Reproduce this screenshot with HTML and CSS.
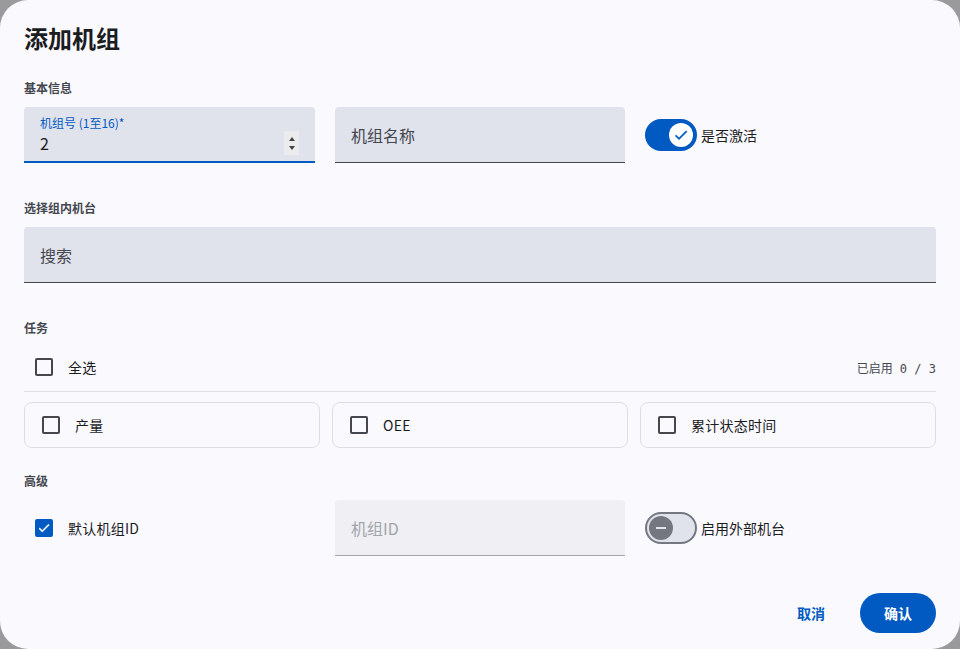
FILE: index.html
```html
<!DOCTYPE html>
<html lang="zh-CN">
<head>
    <meta charset="UTF-8">
    <meta name="viewport" content="width=device-width, initial-scale=1.0">
    <title>添加机组</title>
    <link rel="stylesheet" href="styles.css">
</head>
<body>
    <div class="dialog">
        <h1 class="title">添加机组</h1>

        <div class="section-label first">基本信息</div>
        <div class="row">
            <div class="field focused">
                <span class="field-label">机组号 (1至16)*</span>
                <span class="field-value">2</span>
                <span class="spin"><i class="up"></i><i class="down"></i></span>
            </div>
            <div class="field">
                <span class="placeholder">机组名称</span>
            </div>
            <div class="switch-wrap">
                <span class="switch on">
                    <span class="thumb">
                        <svg width="16" height="16" viewBox="0 0 24 24"><path d="M9 16.2 4.8 12l-1.4 1.4L9 19 21 7l-1.4-1.4z" fill="#005ac1" stroke="#005ac1" stroke-width="0.8"/></svg>
                    </span>
                </span>
                <span class="switch-text">是否激活</span>
            </div>
        </div>

        <div class="section-label">选择组内机台</div>
        <div class="field wide">
            <span class="placeholder">搜索</span>
        </div>

        <div class="section-label">任务</div>
        <div class="select-all">
            <span class="box"></span>
            <span class="check-text">全选</span>
            <span class="count">已启用 0 / 3</span>
        </div>
        <div class="divider"></div>
        <div class="cards">
            <div class="card"><span class="box"></span><span class="check-text">产量</span></div>
            <div class="card"><span class="box"></span><span class="check-text">OEE</span></div>
            <div class="card"><span class="box"></span><span class="check-text">累计状态时间</span></div>
        </div>

        <div class="section-label after-cards">高级</div>
        <div class="row">
            <div class="check-cell">
                <span class="box checked">
                    <svg width="14" height="14" viewBox="0 0 24 24"><path d="M9 16.2 4.8 12l-1.4 1.4L9 19 21 7l-1.4-1.4z" fill="#fff" stroke="#fff" stroke-width="1"/></svg>
                </span>
                <span class="check-text">默认机组ID</span>
            </div>
            <div class="field disabled">
                <span class="placeholder">机组ID</span>
            </div>
            <div class="switch-wrap">
                <span class="switch off">
                    <span class="thumb"><span class="minus"></span></span>
                </span>
                <span class="switch-text">启用外部机台</span>
            </div>
        </div>

        <div class="actions">
            <button class="btn-text">取消</button>
            <button class="btn-filled">确认</button>
        </div>
    </div>
</body>
</html>
```

FILE: styles.css
```css
body {
    margin: 0;
    padding: 0;
    background-color: #9a9a9c;
    font-family: "Noto Sans CJK SC", "Noto Sans", sans-serif;
    color: #1a1c1e;
}
.dialog {
    width: 960px;
    height: 649px;
    box-sizing: border-box;
    background-color: #faf9fe;
    border-radius: 28px;
    padding: 22px 24px 16px;
    overflow: hidden;
}
.title {
    margin: 0;
    font-size: 24px;
    line-height: 32px;
    font-weight: 700;
    color: #1a1c1e;
}
.section-label {
    font-size: 12px;
    line-height: 20px;
    font-weight: 700;
    color: #44474e;
    margin: 35px 0 9px;
}
.section-label.first {
    margin-top: 24px;
}
.section-label.after-cards {
    margin-top: 23px;
}
.row {
    display: grid;
    grid-template-columns: 291px 290px 1fr;
    column-gap: 20px;
    align-items: center;
}
.field {
    position: relative;
    height: 56px;
    box-sizing: border-box;
    background-color: #e0e2ec;
    border-radius: 4px 4px 0 0;
    border-bottom: 1px solid #44474e;
    padding: 0 16px;
    display: flex;
    flex-direction: column;
    justify-content: center;
}
.field.focused {
    border-bottom: 2px solid #005ac1;
    padding-top: 2px;
}
.field.disabled {
    background-color: #efeff4;
    border-bottom-color: #a4a6ac;
}
.field.disabled .placeholder {
    color: #a3a5ab;
}
.field-label {
    font-size: 12px;
    line-height: 16px;
    color: #005ac1;
}
.field-value {
    font-size: 16px;
    line-height: 24px;
}
.placeholder {
    font-size: 16px;
    line-height: 24px;
    color: #44474e;
}
.spin {
    position: absolute;
    right: 16px;
    top: 24px;
    width: 15px;
    height: 24px;
    background-color: #ececee;
    display: flex;
    flex-direction: column;
    align-items: center;
    justify-content: center;
    gap: 5px;
}
.spin i {
    width: 0;
    height: 0;
    border-left: 3px solid transparent;
    border-right: 3px solid transparent;
}
.spin .up {
    border-bottom: 4px solid #444;
}
.spin .down {
    border-top: 4px solid #444;
}
.switch-wrap {
    display: flex;
    align-items: center;
    gap: 4px;
}
.switch {
    width: 52px;
    height: 32px;
    box-sizing: border-box;
    border-radius: 16px;
    display: flex;
    align-items: center;
}
.switch.on {
    background-color: #005ac1;
    justify-content: flex-end;
    padding-right: 4px;
}
.switch.off {
    background-color: #e0e2ec;
    border: 2px solid #74777f;
    padding-left: 2px;
}
.thumb {
    width: 24px;
    height: 24px;
    border-radius: 50%;
    display: flex;
    align-items: center;
    justify-content: center;
}
.switch.on .thumb {
    background-color: #fff;
}
.switch.off .thumb {
    background-color: #74777f;
}
.minus {
    width: 10px;
    height: 2px;
    background-color: #e0e2ec;
}
.switch-text {
    font-size: 14px;
    line-height: 20px;
    color: #1a1c1e;
}
.box {
    width: 18px;
    height: 18px;
    box-sizing: border-box;
    border: 2px solid #44474e;
    border-radius: 2px;
    flex-shrink: 0;
    display: flex;
    align-items: center;
    justify-content: center;
}
.box.checked {
    background-color: #005ac1;
    border-color: #005ac1;
}
.check-text {
    font-size: 14px;
    line-height: 20px;
    letter-spacing: 0.25px;
    color: #1a1c1e;
}
.select-all {
    display: flex;
    align-items: center;
    gap: 15px;
    height: 40px;
    padding-left: 11px;
    margin-bottom: 4px;
}
.count {
    margin-left: auto;
    font-family: "DejaVu Sans Mono", "Noto Sans CJK SC", monospace;
    font-size: 12px;
    color: #44474e;
}
.divider {
    height: 1px;
    background-color: #e0e0e4;
}
.cards {
    display: grid;
    grid-template-columns: repeat(3, 1fr);
    gap: 12px;
    margin-top: 10px;
}
.card {
    height: 46px;
    box-sizing: border-box;
    border: 1px solid #dedfe4;
    border-radius: 8px;
    display: flex;
    align-items: center;
    gap: 15px;
    padding-left: 17px;
}
.check-cell {
    display: flex;
    align-items: center;
    gap: 15px;
    padding-left: 11px;
}
.actions {
    display: flex;
    justify-content: flex-end;
    align-items: center;
    gap: 23px;
    margin-top: 37px;
}
button {
    font-family: "Noto Sans CJK SC", sans-serif;
    font-size: 14px;
    font-weight: 700;
    height: 40px;
    border: none;
    border-radius: 20px;
    cursor: pointer;
}
.btn-text {
    background: none;
    color: #005ac1;
    padding: 0 12px;
}
.btn-filled {
    background-color: #005ac1;
    color: #fff;
    padding: 0 24px;
}
```
